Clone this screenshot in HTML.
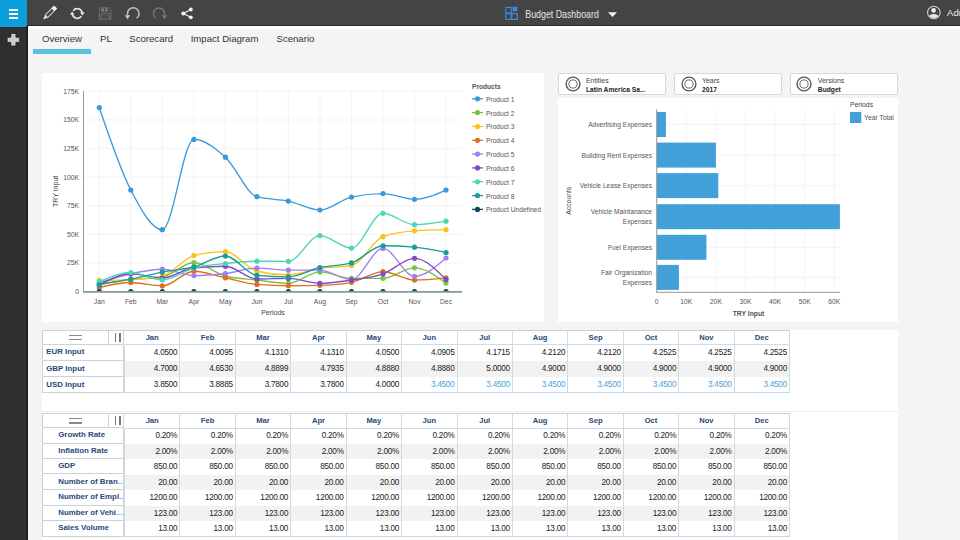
<!DOCTYPE html>
<html><head><meta charset="utf-8"><style>
*{margin:0;padding:0}
html,body{width:960px;height:540px;overflow:hidden;background:#f4f4f4;font-family:"Liberation Sans", sans-serif;position:relative}
.abs{position:absolute}
.fbox{position:absolute;top:73.2px;width:108px;height:21.4px;background:#fff;border:1px solid #d2d9d9;border-radius:2px;box-sizing:border-box}
.ft{position:absolute;left:27px;top:2.4px;font-size:6.9px;color:#444;line-height:8px;white-space:nowrap}
.fv{position:absolute;left:27px;top:11.6px;font-size:6.7px;color:#222;font-weight:bold;line-height:8px;white-space:nowrap}
.rh{position:absolute;left:41.7px;width:82.8px;box-sizing:border-box;border:1px solid #cdd3d3;border-top:0;font-size:7.9px;font-weight:bold;color:#294a78;white-space:nowrap;overflow:hidden}
.ch{position:absolute;text-align:center;font-size:7.6px;font-weight:bold;color:#294a78}
.cv{position:absolute;text-align:right;font-size:8.2px;letter-spacing:-0.25px;color:#222}
.bl{color:#4b9fe0}
.tab{position:absolute;top:33px;font-size:9.6px;color:#333;line-height:11px;white-space:nowrap}
</style></head><body>
<div class="abs" style="left:0;top:0;width:960px;height:26.4px;background:#444"></div>
<div class="abs" style="left:0;top:24.8px;width:960px;height:1.6px;background:#262626"></div>
<div class="abs" style="left:0;top:0;width:26.5px;height:26.5px;background:#0a9fdb"></div>
<div class="abs" style="left:8.6px;top:8.9px;width:9.4px;height:1.9px;background:#fff"></div>
<div class="abs" style="left:8.6px;top:12.9px;width:9.4px;height:1.9px;background:#fff"></div>
<div class="abs" style="left:8.6px;top:16.9px;width:9.4px;height:1.9px;background:#fff"></div>
<div class="abs" style="left:0;top:26.5px;width:26.5px;height:514px;background:#2f2f2f"></div>
<div class="abs" style="left:26.4px;top:26px;width:1.5px;height:514px;background:#1e1e1e"></div>
<div class="abs" style="left:27.9px;top:26.4px;width:933px;height:2.6px;background:#fff"></div>
<svg class="abs" style="left:0;top:26px" width="27" height="27"><path d="M10.9 7.5h5v3.8h3.7v5h-3.7v3.7h-5v-3.7h-3.7v-5h3.7z" fill="#cdcdcd" stroke="#1e1e1e" stroke-width="0.7" stroke-linejoin="round"/></svg>
<svg class="abs" style="left:0;top:0" width="960" height="26">
<g transform="translate(43.2,19.5) rotate(-45)">
<path d="M0,0 L4.2,-1.9 L4.2,1.9 Z" fill="#e6e6e6"/>
<rect x="4.6" y="-1.75" width="9.6" height="3.5" fill="none" stroke="#d8d8d8" stroke-width="1"/>
<rect x="14.2" y="-2.2" width="3.4" height="4.4" fill="#f0f0f0"/>
</g>
<g fill="none" stroke="#e6e6e6" stroke-width="1.7">
<path d="M73.3 10.7 A4.9 4.9 0 0 1 82.1 12.65"/>
<path d="M81.3 16.3 A4.9 4.9 0 0 1 72.5 14.35"/>
</g>
<path d="M80.2 12.4 L84.6 12.2 L82.5 15.4 Z" fill="#f0f0f0"/>
<path d="M74.4 14.6 L70.0 14.8 L72.1 11.6 Z" fill="#f0f0f0"/>
<g fill="none" stroke="#6e6e6e" stroke-width="1">
<path d="M99.3 7.8 h9.8 l1.9 1.9 v9.6 h-11.7 z"/>
<path d="M101.5 7.8 v3.6 h6 v-3.6"/>
<path d="M101.2 13.6 h8.2 v5.7"/>
<path d="M101.2 13.6 v5.7"/>
</g>
<path d="M102.2 8.4 h1.6 v2.6 h-1.6z M105.4 8.4 h1.6 v2.6 h-1.6z" fill="#8a8a8a"/>
<path d="M102.5 15.5 h5.6 M102.5 17.3 h5.6" stroke="#5c5c5c" stroke-width="0.7"/>
<path d="M136.55 18.2 A5.75 5.75 0 1 0 127.5 13.5 L127.5 15" fill="none" stroke="#bcbcbc" stroke-width="1.5"/>
<path d="M124.9 15.2 L130.1 15.2 L127.5 19.3 Z" fill="#d0d0d0"/>
<path d="M155.8 18 A5.5 5.5 0 1 1 164.5 13.5 L164.5 15" fill="none" stroke="#787878" stroke-width="1.3"/>
<path d="M161.9 15.2 L167.1 15.2 L164.5 19.3 Z" fill="#7c7c7c"/>
<g stroke="#f2f2f2" stroke-width="1.2"><path d="M183.3 13.5 L190.8 9.5 M183.3 13.5 L190.8 17.3"/></g>
<circle cx="183.3" cy="13.5" r="2" fill="#f6f6f6"/><circle cx="190.8" cy="9.5" r="1.9" fill="#f6f6f6"/><circle cx="190.8" cy="17.3" r="1.9" fill="#f6f6f6"/>
<g fill="none" stroke="#3b8ad6" stroke-width="1.2">
<rect x="505.8" y="7.4" width="5.4" height="5.6" /><rect x="505.8" y="13.6" width="5.4" height="5.8"/><rect x="511.8" y="13.6" width="5.6" height="5.8"/>
</g>
<rect x="512.6" y="6.8" width="4.6" height="4.6" fill="#3b8ad6"/>
<text x="525.3" y="17.6" font-size="10.1" fill="#e4e4e4" font-family='Liberation Sans' textLength="73.5" lengthAdjust="spacingAndGlyphs">Budget Dashboard</text>
<path d="M608 12.2 L617 12.2 L612.5 17 Z" fill="#f0f0f0"/>
<circle cx="933.85" cy="12.5" r="6.3" fill="none" stroke="#d4d4d4" stroke-width="1.1"/>
<clipPath id="uc"><circle cx="933.85" cy="12.5" r="5.6"/></clipPath>
<circle cx="933.6" cy="10.4" r="2.35" fill="#ececec"/>
<path d="M927 19.5 L927.8 17.6 Q929.5 14.2 933.7 14.1 Q937.9 14.2 939.6 17.6 L940.5 19.5 Z" fill="#e6e6e6" clip-path="url(#uc)"/>
<text x="947.1" y="16.4" font-size="9.5" fill="#eee" font-family='Liberation Sans'>Admin</text>
</svg>
<div class="tab" style="left:42px">Overview</div>
<div class="tab" style="left:100px">PL</div>
<div class="tab" style="left:129.3px">Scorecard</div>
<div class="tab" style="left:190.7px">Impact Diagram</div>
<div class="tab" style="left:276.5px">Scenario</div>
<div class="abs" style="left:33px;top:49.2px;width:58px;height:4.6px;background:#5bc2de"></div>
<div class="abs" style="left:41.7px;top:73px;width:502.7px;height:249.3px;background:#fff"></div>
<div class="abs" style="left:558px;top:97.5px;width:339.5px;height:224.8px;background:#fff"></div>
<div class="abs" style="left:41.7px;top:330px;width:856px;height:210px;background:#fff"></div>
<div class="abs" style="left:41.7px;top:411.4px;width:856px;height:0.8px;background:#ececec"></div>
<div class="fbox" style="left:558.0px"><svg width="18" height="18" style="position:absolute;left:4.6px;top:0.6px"><circle cx="9" cy="9" r="6.9" fill="none" stroke="#555" stroke-width="1.4"/><circle cx="9" cy="9" r="4.1" fill="none" stroke="#666" stroke-width="1"/></svg><div class="ft">Entities</div><div class="fv">Latin America Sa...</div></div><div class="fbox" style="left:674.0px"><svg width="18" height="18" style="position:absolute;left:4.6px;top:0.6px"><circle cx="9" cy="9" r="6.9" fill="none" stroke="#555" stroke-width="1.4"/><circle cx="9" cy="9" r="4.1" fill="none" stroke="#666" stroke-width="1"/></svg><div class="ft">Years</div><div class="fv">2017</div></div><div class="fbox" style="left:789.8px"><svg width="18" height="18" style="position:absolute;left:4.6px;top:0.6px"><circle cx="9" cy="9" r="6.9" fill="none" stroke="#555" stroke-width="1.4"/><circle cx="9" cy="9" r="4.1" fill="none" stroke="#666" stroke-width="1"/></svg><div class="ft">Versions</div><div class="fv">Budget</div></div>
<svg class="abs" style="left:0;top:0;font-family:"Liberation Sans", sans-serif" width="960" height="540">
<line x1="84" y1="291.6" x2="462" y2="291.6" stroke="#f0f0f0" stroke-width="0.8"/>
<text x="79" y="294.0" text-anchor="end" font-size="6.8" fill="#555">0</text>
<line x1="84" y1="263.0" x2="462" y2="263.0" stroke="#f0f0f0" stroke-width="0.8"/>
<text x="79" y="265.4" text-anchor="end" font-size="6.8" fill="#555">25K</text>
<line x1="84" y1="234.4" x2="462" y2="234.4" stroke="#f0f0f0" stroke-width="0.8"/>
<text x="79" y="236.8" text-anchor="end" font-size="6.8" fill="#555">50K</text>
<line x1="84" y1="205.8" x2="462" y2="205.8" stroke="#f0f0f0" stroke-width="0.8"/>
<text x="79" y="208.2" text-anchor="end" font-size="6.8" fill="#555">75K</text>
<line x1="84" y1="177.2" x2="462" y2="177.2" stroke="#f0f0f0" stroke-width="0.8"/>
<text x="79" y="179.6" text-anchor="end" font-size="6.8" fill="#555">100K</text>
<line x1="84" y1="148.6" x2="462" y2="148.6" stroke="#f0f0f0" stroke-width="0.8"/>
<text x="79" y="151.0" text-anchor="end" font-size="6.8" fill="#555">125K</text>
<line x1="84" y1="120.0" x2="462" y2="120.0" stroke="#f0f0f0" stroke-width="0.8"/>
<text x="79" y="122.4" text-anchor="end" font-size="6.8" fill="#555">150K</text>
<line x1="84" y1="91.4" x2="462" y2="91.4" stroke="#f0f0f0" stroke-width="0.8"/>
<text x="79" y="93.8" text-anchor="end" font-size="6.8" fill="#555">175K</text>
<line x1="99.3" y1="91" x2="99.3" y2="291.6" stroke="#f0f0f0" stroke-width="0.8"/>
<text x="99.3" y="304" text-anchor="middle" font-size="6.8" fill="#555">Jan</text>
<line x1="130.8" y1="91" x2="130.8" y2="291.6" stroke="#f0f0f0" stroke-width="0.8"/>
<text x="130.8" y="304" text-anchor="middle" font-size="6.8" fill="#555">Feb</text>
<line x1="162.3" y1="91" x2="162.3" y2="291.6" stroke="#f0f0f0" stroke-width="0.8"/>
<text x="162.3" y="304" text-anchor="middle" font-size="6.8" fill="#555">Mar</text>
<line x1="193.9" y1="91" x2="193.9" y2="291.6" stroke="#f0f0f0" stroke-width="0.8"/>
<text x="193.9" y="304" text-anchor="middle" font-size="6.8" fill="#555">Apr</text>
<line x1="225.4" y1="91" x2="225.4" y2="291.6" stroke="#f0f0f0" stroke-width="0.8"/>
<text x="225.4" y="304" text-anchor="middle" font-size="6.8" fill="#555">May</text>
<line x1="256.9" y1="91" x2="256.9" y2="291.6" stroke="#f0f0f0" stroke-width="0.8"/>
<text x="256.9" y="304" text-anchor="middle" font-size="6.8" fill="#555">Jun</text>
<line x1="288.4" y1="91" x2="288.4" y2="291.6" stroke="#f0f0f0" stroke-width="0.8"/>
<text x="288.4" y="304" text-anchor="middle" font-size="6.8" fill="#555">Jul</text>
<line x1="319.9" y1="91" x2="319.9" y2="291.6" stroke="#f0f0f0" stroke-width="0.8"/>
<text x="319.9" y="304" text-anchor="middle" font-size="6.8" fill="#555">Aug</text>
<line x1="351.5" y1="91" x2="351.5" y2="291.6" stroke="#f0f0f0" stroke-width="0.8"/>
<text x="351.5" y="304" text-anchor="middle" font-size="6.8" fill="#555">Sep</text>
<line x1="383.0" y1="91" x2="383.0" y2="291.6" stroke="#f0f0f0" stroke-width="0.8"/>
<text x="383.0" y="304" text-anchor="middle" font-size="6.8" fill="#555">Oct</text>
<line x1="414.5" y1="91" x2="414.5" y2="291.6" stroke="#f0f0f0" stroke-width="0.8"/>
<text x="414.5" y="304" text-anchor="middle" font-size="6.8" fill="#555">Nov</text>
<line x1="446.0" y1="91" x2="446.0" y2="291.6" stroke="#f0f0f0" stroke-width="0.8"/>
<text x="446.0" y="304" text-anchor="middle" font-size="6.8" fill="#555">Dec</text>
<line x1="83.5" y1="91" x2="83.5" y2="291.6" stroke="#999" stroke-width="1"/>
<clipPath id="pc"><rect x="60" y="80" width="420" height="211.6"/></clipPath>
<text x="273" y="315" text-anchor="middle" font-size="7" fill="#444">Periods</text>
<text transform="translate(58.3,191.4) rotate(-90)" text-anchor="middle" font-size="7" fill="#444">TRY Input</text>
<g clip-path="url(#pc)">
<path d="M99.30,107.50 C109.81,138.57 120.31,169.63 130.82,190.00 C141.33,210.37 151.83,229.70 162.34,229.70 C172.85,229.70 183.35,139.40 193.86,139.40 C204.37,139.40 214.87,147.65 225.38,157.20 C235.89,166.75 246.39,193.77 256.90,196.70 C267.41,199.63 277.91,198.88 288.42,201.10 C298.93,203.32 309.43,210.00 319.94,210.00 C330.45,210.00 340.95,199.43 351.46,197.10 C361.97,194.77 372.47,193.60 382.98,193.60 C393.49,193.60 403.99,199.30 414.50,199.30 C425.01,199.30 435.51,194.70 446.02,190.10" fill="none" stroke="#3a9ad9" stroke-width="1.35"/>
<circle cx="99.3" cy="107.5" r="2.6" fill="#3a9ad9"/>
<circle cx="130.8" cy="190.0" r="2.6" fill="#3a9ad9"/>
<circle cx="162.3" cy="229.7" r="2.6" fill="#3a9ad9"/>
<circle cx="193.9" cy="139.4" r="2.6" fill="#3a9ad9"/>
<circle cx="225.4" cy="157.2" r="2.6" fill="#3a9ad9"/>
<circle cx="256.9" cy="196.7" r="2.6" fill="#3a9ad9"/>
<circle cx="288.4" cy="201.1" r="2.6" fill="#3a9ad9"/>
<circle cx="319.9" cy="210.0" r="2.6" fill="#3a9ad9"/>
<circle cx="351.5" cy="197.1" r="2.6" fill="#3a9ad9"/>
<circle cx="383.0" cy="193.6" r="2.6" fill="#3a9ad9"/>
<circle cx="414.5" cy="199.3" r="2.6" fill="#3a9ad9"/>
<circle cx="446.0" cy="190.1" r="2.6" fill="#3a9ad9"/>
<path d="M99.30,284.00 C109.81,282.33 120.31,280.67 130.82,279.50 C141.33,278.33 151.83,278.67 162.34,277.00 C172.85,275.33 183.35,262.50 193.86,262.50 C204.37,262.50 214.87,273.33 225.38,276.00 C235.89,278.67 246.39,278.78 256.90,280.00 C267.41,281.22 277.91,283.30 288.42,283.30 C298.93,283.30 309.43,271.90 319.94,271.90 C330.45,271.90 340.95,278.40 351.46,278.40 C361.97,278.40 372.47,278.37 382.98,278.30 C393.49,278.23 403.99,267.80 414.50,267.80 C425.01,267.80 435.51,275.40 446.02,283.00" fill="none" stroke="#7cc243" stroke-width="1.35"/>
<circle cx="99.3" cy="284.0" r="2.6" fill="#7cc243"/>
<circle cx="130.8" cy="279.5" r="2.6" fill="#7cc243"/>
<circle cx="162.3" cy="277.0" r="2.6" fill="#7cc243"/>
<circle cx="193.9" cy="262.5" r="2.6" fill="#7cc243"/>
<circle cx="225.4" cy="276.0" r="2.6" fill="#7cc243"/>
<circle cx="256.9" cy="280.0" r="2.6" fill="#7cc243"/>
<circle cx="288.4" cy="283.3" r="2.6" fill="#7cc243"/>
<circle cx="319.9" cy="271.9" r="2.6" fill="#7cc243"/>
<circle cx="351.5" cy="278.4" r="2.6" fill="#7cc243"/>
<circle cx="383.0" cy="278.3" r="2.6" fill="#7cc243"/>
<circle cx="414.5" cy="267.8" r="2.6" fill="#7cc243"/>
<circle cx="446.0" cy="283.0" r="2.6" fill="#7cc243"/>
<path d="M99.30,280.40 C109.81,280.27 120.31,280.13 130.82,279.60 C141.33,279.07 151.83,278.40 162.34,276.00 C172.85,273.60 183.35,258.27 193.86,255.60 C204.37,252.93 214.87,251.60 225.38,251.60 C235.89,251.60 246.39,268.82 256.90,271.25 C267.41,273.68 277.91,274.90 288.42,274.90 C298.93,274.90 309.43,269.98 319.94,268.40 C330.45,266.82 340.95,267.40 351.46,265.40 C361.97,263.40 372.47,240.63 382.98,236.70 C393.49,232.77 403.99,231.53 414.50,230.80 C425.01,230.07 435.51,229.88 446.02,229.70" fill="none" stroke="#f7c21c" stroke-width="1.35"/>
<circle cx="99.3" cy="280.4" r="2.6" fill="#f7c21c"/>
<circle cx="130.8" cy="279.6" r="2.6" fill="#f7c21c"/>
<circle cx="162.3" cy="276.0" r="2.6" fill="#f7c21c"/>
<circle cx="193.9" cy="255.6" r="2.6" fill="#f7c21c"/>
<circle cx="225.4" cy="251.6" r="2.6" fill="#f7c21c"/>
<circle cx="256.9" cy="271.2" r="2.6" fill="#f7c21c"/>
<circle cx="288.4" cy="274.9" r="2.6" fill="#f7c21c"/>
<circle cx="319.9" cy="268.4" r="2.6" fill="#f7c21c"/>
<circle cx="351.5" cy="265.4" r="2.6" fill="#f7c21c"/>
<circle cx="383.0" cy="236.7" r="2.6" fill="#f7c21c"/>
<circle cx="414.5" cy="230.8" r="2.6" fill="#f7c21c"/>
<circle cx="446.0" cy="229.7" r="2.6" fill="#f7c21c"/>
<path d="M99.30,287.50 C109.81,285.00 120.31,282.50 130.82,282.50 C141.33,282.50 151.83,285.90 162.34,285.90 C172.85,285.90 183.35,271.25 193.86,271.25 C204.37,271.25 214.87,275.56 225.38,277.75 C235.89,279.94 246.39,283.53 256.90,284.40 C267.41,285.27 277.91,285.70 288.42,285.70 C298.93,285.70 309.43,285.57 319.94,285.30 C330.45,285.03 340.95,284.30 351.46,282.30 C361.97,280.30 372.47,271.70 382.98,271.70 C393.49,271.70 403.99,280.00 414.50,280.00 C425.01,280.00 435.51,278.90 446.02,277.80" fill="none" stroke="#df6f20" stroke-width="1.35"/>
<circle cx="99.3" cy="287.5" r="2.6" fill="#df6f20"/>
<circle cx="130.8" cy="282.5" r="2.6" fill="#df6f20"/>
<circle cx="162.3" cy="285.9" r="2.6" fill="#df6f20"/>
<circle cx="193.9" cy="271.2" r="2.6" fill="#df6f20"/>
<circle cx="225.4" cy="277.8" r="2.6" fill="#df6f20"/>
<circle cx="256.9" cy="284.4" r="2.6" fill="#df6f20"/>
<circle cx="288.4" cy="285.7" r="2.6" fill="#df6f20"/>
<circle cx="319.9" cy="285.3" r="2.6" fill="#df6f20"/>
<circle cx="351.5" cy="282.3" r="2.6" fill="#df6f20"/>
<circle cx="383.0" cy="271.7" r="2.6" fill="#df6f20"/>
<circle cx="414.5" cy="280.0" r="2.6" fill="#df6f20"/>
<circle cx="446.0" cy="277.8" r="2.6" fill="#df6f20"/>
<path d="M99.30,283.00 C109.81,279.52 120.31,276.05 130.82,273.75 C141.33,271.45 151.83,269.20 162.34,269.20 C172.85,269.20 183.35,275.60 193.86,275.60 C204.37,275.60 214.87,274.75 225.38,273.50 C235.89,272.25 246.39,268.10 256.90,268.10 C267.41,268.10 277.91,270.10 288.42,270.10 C298.93,270.10 309.43,270.10 319.94,270.10 C330.45,270.10 340.95,279.50 351.46,279.50 C361.97,279.50 372.47,248.40 382.98,248.40 C393.49,248.40 403.99,276.30 414.50,276.30 C425.01,276.30 435.51,267.15 446.02,258.00" fill="none" stroke="#a27ff0" stroke-width="1.35"/>
<circle cx="99.3" cy="283.0" r="2.6" fill="#a27ff0"/>
<circle cx="130.8" cy="273.8" r="2.6" fill="#a27ff0"/>
<circle cx="162.3" cy="269.2" r="2.6" fill="#a27ff0"/>
<circle cx="193.9" cy="275.6" r="2.6" fill="#a27ff0"/>
<circle cx="225.4" cy="273.5" r="2.6" fill="#a27ff0"/>
<circle cx="256.9" cy="268.1" r="2.6" fill="#a27ff0"/>
<circle cx="288.4" cy="270.1" r="2.6" fill="#a27ff0"/>
<circle cx="319.9" cy="270.1" r="2.6" fill="#a27ff0"/>
<circle cx="351.5" cy="279.5" r="2.6" fill="#a27ff0"/>
<circle cx="383.0" cy="248.4" r="2.6" fill="#a27ff0"/>
<circle cx="414.5" cy="276.3" r="2.6" fill="#a27ff0"/>
<circle cx="446.0" cy="258.0" r="2.6" fill="#a27ff0"/>
<path d="M99.30,285.00 C109.81,279.38 120.31,273.75 130.82,273.75 C141.33,273.75 151.83,278.00 162.34,278.00 C172.85,278.00 183.35,268.75 193.86,267.75 C204.37,266.75 214.87,266.25 225.38,266.25 C235.89,266.25 246.39,279.00 256.90,279.00 C267.41,279.00 277.91,278.40 288.42,278.40 C298.93,278.40 309.43,283.30 319.94,283.30 C330.45,283.30 340.95,281.68 351.46,280.10 C361.97,278.52 372.47,277.43 382.98,273.80 C393.49,270.17 403.99,258.30 414.50,258.30 C425.01,258.30 435.51,268.90 446.02,279.50" fill="none" stroke="#7b4cc3" stroke-width="1.35"/>
<circle cx="99.3" cy="285.0" r="2.6" fill="#7b4cc3"/>
<circle cx="130.8" cy="273.8" r="2.6" fill="#7b4cc3"/>
<circle cx="162.3" cy="278.0" r="2.6" fill="#7b4cc3"/>
<circle cx="193.9" cy="267.8" r="2.6" fill="#7b4cc3"/>
<circle cx="225.4" cy="266.2" r="2.6" fill="#7b4cc3"/>
<circle cx="256.9" cy="279.0" r="2.6" fill="#7b4cc3"/>
<circle cx="288.4" cy="278.4" r="2.6" fill="#7b4cc3"/>
<circle cx="319.9" cy="283.3" r="2.6" fill="#7b4cc3"/>
<circle cx="351.5" cy="280.1" r="2.6" fill="#7b4cc3"/>
<circle cx="383.0" cy="273.8" r="2.6" fill="#7b4cc3"/>
<circle cx="414.5" cy="258.3" r="2.6" fill="#7b4cc3"/>
<circle cx="446.0" cy="279.5" r="2.6" fill="#7b4cc3"/>
<path d="M99.30,281.70 C109.81,277.10 120.31,272.50 130.82,272.50 C141.33,272.50 151.83,280.00 162.34,280.00 C172.85,280.00 183.35,270.75 193.86,268.00 C204.37,265.25 214.87,264.62 225.38,263.50 C235.89,262.38 246.39,261.25 256.90,261.25 C267.41,261.25 277.91,261.30 288.42,261.30 C298.93,261.30 309.43,235.60 319.94,235.60 C330.45,235.60 340.95,248.10 351.46,248.10 C361.97,248.10 372.47,213.30 382.98,213.30 C393.49,213.30 403.99,224.70 414.50,224.70 C425.01,224.70 435.51,222.95 446.02,221.20" fill="none" stroke="#4ed5b5" stroke-width="1.35"/>
<circle cx="99.3" cy="281.7" r="2.6" fill="#4ed5b5"/>
<circle cx="130.8" cy="272.5" r="2.6" fill="#4ed5b5"/>
<circle cx="162.3" cy="280.0" r="2.6" fill="#4ed5b5"/>
<circle cx="193.9" cy="268.0" r="2.6" fill="#4ed5b5"/>
<circle cx="225.4" cy="263.5" r="2.6" fill="#4ed5b5"/>
<circle cx="256.9" cy="261.2" r="2.6" fill="#4ed5b5"/>
<circle cx="288.4" cy="261.3" r="2.6" fill="#4ed5b5"/>
<circle cx="319.9" cy="235.6" r="2.6" fill="#4ed5b5"/>
<circle cx="351.5" cy="248.1" r="2.6" fill="#4ed5b5"/>
<circle cx="383.0" cy="213.3" r="2.6" fill="#4ed5b5"/>
<circle cx="414.5" cy="224.7" r="2.6" fill="#4ed5b5"/>
<circle cx="446.0" cy="221.2" r="2.6" fill="#4ed5b5"/>
<path d="M99.30,284.60 C109.81,282.94 120.31,281.28 130.82,279.20 C141.33,277.12 151.83,274.15 162.34,272.10 C172.85,270.05 183.35,269.58 193.86,266.90 C204.37,264.22 214.87,256.00 225.38,256.00 C235.89,256.00 246.39,274.40 256.90,275.40 C267.41,276.40 277.91,276.90 288.42,276.90 C298.93,276.90 309.43,269.83 319.94,267.50 C330.45,265.17 340.95,265.97 351.46,262.90 C361.97,259.83 372.47,245.80 382.98,245.80 C393.49,245.80 403.99,246.27 414.50,247.20 C425.01,248.13 435.51,250.32 446.02,252.50" fill="none" stroke="#1a9d98" stroke-width="1.35"/>
<circle cx="99.3" cy="284.6" r="2.6" fill="#1a9d98"/>
<circle cx="130.8" cy="279.2" r="2.6" fill="#1a9d98"/>
<circle cx="162.3" cy="272.1" r="2.6" fill="#1a9d98"/>
<circle cx="193.9" cy="266.9" r="2.6" fill="#1a9d98"/>
<circle cx="225.4" cy="256.0" r="2.6" fill="#1a9d98"/>
<circle cx="256.9" cy="275.4" r="2.6" fill="#1a9d98"/>
<circle cx="288.4" cy="276.9" r="2.6" fill="#1a9d98"/>
<circle cx="319.9" cy="267.5" r="2.6" fill="#1a9d98"/>
<circle cx="351.5" cy="262.9" r="2.6" fill="#1a9d98"/>
<circle cx="383.0" cy="245.8" r="2.6" fill="#1a9d98"/>
<circle cx="414.5" cy="247.2" r="2.6" fill="#1a9d98"/>
<circle cx="446.0" cy="252.5" r="2.6" fill="#1a9d98"/>
<path d="M99.30,291.60 C109.81,291.60 120.31,291.60 130.82,291.60 C141.33,291.60 151.83,291.60 162.34,291.60 C172.85,291.60 183.35,291.60 193.86,291.60 C204.37,291.60 214.87,291.60 225.38,291.60 C235.89,291.60 246.39,291.60 256.90,291.60 C267.41,291.60 277.91,291.60 288.42,291.60 C298.93,291.60 309.43,291.60 319.94,291.60 C330.45,291.60 340.95,291.60 351.46,291.60 C361.97,291.60 372.47,291.60 382.98,291.60 C393.49,291.60 403.99,291.60 414.50,291.60 C425.01,291.60 435.51,291.60 446.02,291.60" fill="none" stroke="#0b4a5a" stroke-width="1.35"/>
<circle cx="99.3" cy="291.6" r="2.6" fill="#0b4a5a"/>
<circle cx="130.8" cy="291.6" r="2.6" fill="#0b4a5a"/>
<circle cx="162.3" cy="291.6" r="2.6" fill="#0b4a5a"/>
<circle cx="193.9" cy="291.6" r="2.6" fill="#0b4a5a"/>
<circle cx="225.4" cy="291.6" r="2.6" fill="#0b4a5a"/>
<circle cx="256.9" cy="291.6" r="2.6" fill="#0b4a5a"/>
<circle cx="288.4" cy="291.6" r="2.6" fill="#0b4a5a"/>
<circle cx="319.9" cy="291.6" r="2.6" fill="#0b4a5a"/>
<circle cx="351.5" cy="291.6" r="2.6" fill="#0b4a5a"/>
<circle cx="383.0" cy="291.6" r="2.6" fill="#0b4a5a"/>
<circle cx="414.5" cy="291.6" r="2.6" fill="#0b4a5a"/>
<circle cx="446.0" cy="291.6" r="2.6" fill="#0b4a5a"/>
</g>
<line x1="83" y1="291.9" x2="462" y2="291.9" stroke="#829a98" stroke-width="1.8"/>
<text x="472" y="88.8" font-size="6.6" font-weight="bold" fill="#555">Products</text>
<line x1="472" y1="98.8" x2="483" y2="98.8" stroke="#3a9ad9" stroke-width="1.3"/>
<circle cx="477.5" cy="98.8" r="2.6" fill="#3a9ad9"/>
<text x="486" y="101.7" font-size="6.65" fill="#555">Product 1</text>
<line x1="472" y1="112.6" x2="483" y2="112.6" stroke="#7cc243" stroke-width="1.3"/>
<circle cx="477.5" cy="112.6" r="2.6" fill="#7cc243"/>
<text x="486" y="115.5" font-size="6.65" fill="#555">Product 2</text>
<line x1="472" y1="126.5" x2="483" y2="126.5" stroke="#f7c21c" stroke-width="1.3"/>
<circle cx="477.5" cy="126.5" r="2.6" fill="#f7c21c"/>
<text x="486" y="129.4" font-size="6.65" fill="#555">Product 3</text>
<line x1="472" y1="140.3" x2="483" y2="140.3" stroke="#df6f20" stroke-width="1.3"/>
<circle cx="477.5" cy="140.3" r="2.6" fill="#df6f20"/>
<text x="486" y="143.2" font-size="6.65" fill="#555">Product 4</text>
<line x1="472" y1="154.1" x2="483" y2="154.1" stroke="#a27ff0" stroke-width="1.3"/>
<circle cx="477.5" cy="154.1" r="2.6" fill="#a27ff0"/>
<text x="486" y="157.0" font-size="6.65" fill="#555">Product 5</text>
<line x1="472" y1="167.9" x2="483" y2="167.9" stroke="#7b4cc3" stroke-width="1.3"/>
<circle cx="477.5" cy="167.9" r="2.6" fill="#7b4cc3"/>
<text x="486" y="170.8" font-size="6.65" fill="#555">Product 6</text>
<line x1="472" y1="181.8" x2="483" y2="181.8" stroke="#4ed5b5" stroke-width="1.3"/>
<circle cx="477.5" cy="181.8" r="2.6" fill="#4ed5b5"/>
<text x="486" y="184.7" font-size="6.65" fill="#555">Product 7</text>
<line x1="472" y1="195.6" x2="483" y2="195.6" stroke="#1a9d98" stroke-width="1.3"/>
<circle cx="477.5" cy="195.6" r="2.6" fill="#1a9d98"/>
<text x="486" y="198.5" font-size="6.65" fill="#555">Product 8</text>
<line x1="472" y1="209.4" x2="483" y2="209.4" stroke="#0b4a5a" stroke-width="1.3"/>
<circle cx="477.5" cy="209.4" r="2.6" fill="#0b4a5a"/>
<text x="486" y="212.3" font-size="6.65" fill="#555">Product Undefined</text>
<line x1="656.7" y1="109.3" x2="656.7" y2="292" stroke="#f0f0f0" stroke-width="0.8"/>
<text x="656.7" y="304.4" text-anchor="middle" font-size="6.8" fill="#555">0</text>
<line x1="686.3" y1="109.3" x2="686.3" y2="292" stroke="#f0f0f0" stroke-width="0.8"/>
<text x="686.3" y="304.4" text-anchor="middle" font-size="6.8" fill="#555">10K</text>
<line x1="715.9" y1="109.3" x2="715.9" y2="292" stroke="#f0f0f0" stroke-width="0.8"/>
<text x="715.9" y="304.4" text-anchor="middle" font-size="6.8" fill="#555">20K</text>
<line x1="745.5" y1="109.3" x2="745.5" y2="292" stroke="#f0f0f0" stroke-width="0.8"/>
<text x="745.5" y="304.4" text-anchor="middle" font-size="6.8" fill="#555">30K</text>
<line x1="775.1" y1="109.3" x2="775.1" y2="292" stroke="#f0f0f0" stroke-width="0.8"/>
<text x="775.1" y="304.4" text-anchor="middle" font-size="6.8" fill="#555">40K</text>
<line x1="804.7" y1="109.3" x2="804.7" y2="292" stroke="#f0f0f0" stroke-width="0.8"/>
<text x="804.7" y="304.4" text-anchor="middle" font-size="6.8" fill="#555">50K</text>
<line x1="834.3" y1="109.3" x2="834.3" y2="292" stroke="#f0f0f0" stroke-width="0.8"/>
<text x="834.3" y="304.4" text-anchor="middle" font-size="6.8" fill="#555">60K</text>
<line x1="657" y1="124.5" x2="840" y2="124.5" stroke="#f0f0f0" stroke-width="0.8"/>
<line x1="657" y1="155.1" x2="840" y2="155.1" stroke="#f0f0f0" stroke-width="0.8"/>
<line x1="657" y1="185.6" x2="840" y2="185.6" stroke="#f0f0f0" stroke-width="0.8"/>
<line x1="657" y1="216.7" x2="840" y2="216.7" stroke="#f0f0f0" stroke-width="0.8"/>
<line x1="657" y1="247.3" x2="840" y2="247.3" stroke="#f0f0f0" stroke-width="0.8"/>
<line x1="657" y1="277.4" x2="840" y2="277.4" stroke="#f0f0f0" stroke-width="0.8"/>
<rect x="656.7" y="112.0" width="9.2" height="25" fill="#42a0d9"/>
<text x="652" y="126.9" text-anchor="end" font-size="6.65" fill="#555">Advertising Expenses</text>
<rect x="656.7" y="142.6" width="59.2" height="25" fill="#42a0d9"/>
<text x="652" y="157.5" text-anchor="end" font-size="6.65" fill="#555">Building Rent Expenses</text>
<rect x="656.7" y="173.1" width="61.6" height="25" fill="#42a0d9"/>
<text x="652" y="188.0" text-anchor="end" font-size="6.65" fill="#555">Vehicle Lease Expenses</text>
<rect x="656.7" y="204.2" width="183.2" height="25" fill="#42a0d9"/>
<text x="652" y="214.1" text-anchor="end" font-size="6.65" fill="#555">Vehicle Maintanance</text>
<text x="652" y="223.9" text-anchor="end" font-size="6.65" fill="#555">Expenses</text>
<rect x="656.7" y="234.8" width="49.7" height="25" fill="#42a0d9"/>
<text x="652" y="249.7" text-anchor="end" font-size="6.65" fill="#555">Fuel Expenses</text>
<rect x="656.7" y="264.9" width="22.2" height="25" fill="#42a0d9"/>
<text x="652" y="274.8" text-anchor="end" font-size="6.65" fill="#555">Fair Organization</text>
<text x="652" y="284.6" text-anchor="end" font-size="6.65" fill="#555">Expenses</text>
<line x1="656.7" y1="109.3" x2="656.7" y2="292.5" stroke="#999" stroke-width="1"/>
<line x1="656.2" y1="292.3" x2="840" y2="292.3" stroke="#aaa" stroke-width="1.2"/>
<text x="748.5" y="315.8" text-anchor="middle" font-size="6.8" font-weight="bold" fill="#555">TRY Input</text>
<text transform="translate(571,200.7) rotate(-90)" text-anchor="middle" font-size="6.8" fill="#444">Accounts</text>
<text x="850" y="107" font-size="6.8" fill="#444">Periods</text>
<rect x="850" y="112" width="11.3" height="11" fill="#42a0d9"/>
<text x="864" y="120" font-size="6.8" fill="#555">Year Total</text>
</svg>
<div style="position:absolute;left:41.7px;top:330.3px;width:748.3px;height:62.3px;border:1px solid #c9cfcf;box-sizing:border-box"></div>
<div style="position:absolute;left:124.5px;top:360.6px;width:665.0px;height:16.0px;background:#f2f2f2"></div>
<div style="position:absolute;left:41.7px;top:330.3px;width:67.5px;height:14.5px;border:1px solid #cdd3d3;box-sizing:border-box"></div>
<div style="position:absolute;left:109.2px;top:330.3px;width:15.3px;height:14.5px;border:1px solid #cdd3d3;border-left:0;box-sizing:border-box"></div>
<div style="position:absolute;left:68.7px;top:334.9px;width:13.3px;height:1.3px;background:#888"></div>
<div style="position:absolute;left:68.7px;top:339.2px;width:13.3px;height:1.3px;background:#888"></div>
<div style="position:absolute;left:114.6px;top:333.2px;width:1.5px;height:8.8px;background:#777"></div>
<div style="position:absolute;left:119.1px;top:333.2px;width:1.5px;height:8.8px;background:#777"></div>
<div class="rh" style="top:344.8px;height:15.8px;line-height:14.8px;padding-left:3.5px">EUR Input</div>
<div class="rh" style="top:360.6px;height:16.0px;line-height:15.0px;padding-left:3.5px">GBP Input</div>
<div class="rh" style="top:376.6px;height:16.0px;line-height:15.0px;padding-left:3.5px">USD Input</div>
<div class="ch" style="left:124.5px;top:331.1px;width:55.4px;height:14.5px;line-height:14.5px">Jan</div>
<div style="position:absolute;left:179.4px;top:330.3px;width:1px;height:62.3px;background:#d3dada"></div>
<div class="ch" style="left:179.9px;top:331.1px;width:55.4px;height:14.5px;line-height:14.5px">Feb</div>
<div style="position:absolute;left:234.8px;top:330.3px;width:1px;height:62.3px;background:#d3dada"></div>
<div class="ch" style="left:235.3px;top:331.1px;width:55.4px;height:14.5px;line-height:14.5px">Mar</div>
<div style="position:absolute;left:290.3px;top:330.3px;width:1px;height:62.3px;background:#d3dada"></div>
<div class="ch" style="left:290.8px;top:331.1px;width:55.4px;height:14.5px;line-height:14.5px">Apr</div>
<div style="position:absolute;left:345.7px;top:330.3px;width:1px;height:62.3px;background:#d3dada"></div>
<div class="ch" style="left:346.2px;top:331.1px;width:55.4px;height:14.5px;line-height:14.5px">May</div>
<div style="position:absolute;left:401.1px;top:330.3px;width:1px;height:62.3px;background:#d3dada"></div>
<div class="ch" style="left:401.6px;top:331.1px;width:55.4px;height:14.5px;line-height:14.5px">Jun</div>
<div style="position:absolute;left:456.5px;top:330.3px;width:1px;height:62.3px;background:#d3dada"></div>
<div class="ch" style="left:457.0px;top:331.1px;width:55.4px;height:14.5px;line-height:14.5px">Jul</div>
<div style="position:absolute;left:511.9px;top:330.3px;width:1px;height:62.3px;background:#d3dada"></div>
<div class="ch" style="left:512.4px;top:331.1px;width:55.4px;height:14.5px;line-height:14.5px">Aug</div>
<div style="position:absolute;left:567.4px;top:330.3px;width:1px;height:62.3px;background:#d3dada"></div>
<div class="ch" style="left:567.9px;top:331.1px;width:55.4px;height:14.5px;line-height:14.5px">Sep</div>
<div style="position:absolute;left:622.8px;top:330.3px;width:1px;height:62.3px;background:#d3dada"></div>
<div class="ch" style="left:623.3px;top:331.1px;width:55.4px;height:14.5px;line-height:14.5px">Oct</div>
<div style="position:absolute;left:678.2px;top:330.3px;width:1px;height:62.3px;background:#d3dada"></div>
<div class="ch" style="left:678.7px;top:331.1px;width:55.4px;height:14.5px;line-height:14.5px">Nov</div>
<div style="position:absolute;left:733.6px;top:330.3px;width:1px;height:62.3px;background:#d3dada"></div>
<div class="ch" style="left:734.1px;top:331.1px;width:55.4px;height:14.5px;line-height:14.5px">Dec</div>
<div style="position:absolute;left:789.0px;top:330.3px;width:1px;height:62.3px;background:#d3dada"></div>
<div style="position:absolute;left:124.5px;top:344.3px;width:665.0px;height:1px;background:#c9dcf0"></div>
<div style="position:absolute;left:124.0px;top:344.8px;width:1px;height:47.8px;background:#c9dcf0"></div>
<div style="position:absolute;left:124.5px;top:391.6px;width:665.0px;height:1.2px;background:#c0d6ee"></div>
<div class="cv" style="left:124.5px;top:344.8px;width:52.9px;height:15.8px;line-height:15.8px">4.0500</div>
<div class="cv" style="left:179.9px;top:344.8px;width:52.9px;height:15.8px;line-height:15.8px">4.0095</div>
<div class="cv" style="left:235.3px;top:344.8px;width:52.9px;height:15.8px;line-height:15.8px">4.1310</div>
<div class="cv" style="left:290.8px;top:344.8px;width:52.9px;height:15.8px;line-height:15.8px">4.1310</div>
<div class="cv" style="left:346.2px;top:344.8px;width:52.9px;height:15.8px;line-height:15.8px">4.0500</div>
<div class="cv" style="left:401.6px;top:344.8px;width:52.9px;height:15.8px;line-height:15.8px">4.0905</div>
<div class="cv" style="left:457.0px;top:344.8px;width:52.9px;height:15.8px;line-height:15.8px">4.1715</div>
<div class="cv" style="left:512.4px;top:344.8px;width:52.9px;height:15.8px;line-height:15.8px">4.2120</div>
<div class="cv" style="left:567.9px;top:344.8px;width:52.9px;height:15.8px;line-height:15.8px">4.2120</div>
<div class="cv" style="left:623.3px;top:344.8px;width:52.9px;height:15.8px;line-height:15.8px">4.2525</div>
<div class="cv" style="left:678.7px;top:344.8px;width:52.9px;height:15.8px;line-height:15.8px">4.2525</div>
<div class="cv" style="left:734.1px;top:344.8px;width:52.9px;height:15.8px;line-height:15.8px">4.2525</div>
<div class="cv" style="left:124.5px;top:360.6px;width:52.9px;height:16.0px;line-height:16.0px">4.7000</div>
<div class="cv" style="left:179.9px;top:360.6px;width:52.9px;height:16.0px;line-height:16.0px">4.6530</div>
<div class="cv" style="left:235.3px;top:360.6px;width:52.9px;height:16.0px;line-height:16.0px">4.8899</div>
<div class="cv" style="left:290.8px;top:360.6px;width:52.9px;height:16.0px;line-height:16.0px">4.7935</div>
<div class="cv" style="left:346.2px;top:360.6px;width:52.9px;height:16.0px;line-height:16.0px">4.8880</div>
<div class="cv" style="left:401.6px;top:360.6px;width:52.9px;height:16.0px;line-height:16.0px">4.8880</div>
<div class="cv" style="left:457.0px;top:360.6px;width:52.9px;height:16.0px;line-height:16.0px">5.0000</div>
<div class="cv" style="left:512.4px;top:360.6px;width:52.9px;height:16.0px;line-height:16.0px">4.9000</div>
<div class="cv" style="left:567.9px;top:360.6px;width:52.9px;height:16.0px;line-height:16.0px">4.9000</div>
<div class="cv" style="left:623.3px;top:360.6px;width:52.9px;height:16.0px;line-height:16.0px">4.9000</div>
<div class="cv" style="left:678.7px;top:360.6px;width:52.9px;height:16.0px;line-height:16.0px">4.9000</div>
<div class="cv" style="left:734.1px;top:360.6px;width:52.9px;height:16.0px;line-height:16.0px">4.9000</div>
<div class="cv" style="left:124.5px;top:376.6px;width:52.9px;height:16.0px;line-height:16.0px">3.8500</div>
<div class="cv" style="left:179.9px;top:376.6px;width:52.9px;height:16.0px;line-height:16.0px">3.8885</div>
<div class="cv" style="left:235.3px;top:376.6px;width:52.9px;height:16.0px;line-height:16.0px">3.7800</div>
<div class="cv" style="left:290.8px;top:376.6px;width:52.9px;height:16.0px;line-height:16.0px">3.7800</div>
<div class="cv" style="left:346.2px;top:376.6px;width:52.9px;height:16.0px;line-height:16.0px">4.0000</div>
<div class="cv bl" style="left:401.6px;top:376.6px;width:52.9px;height:16.0px;line-height:16.0px">3.4500</div>
<div class="cv bl" style="left:457.0px;top:376.6px;width:52.9px;height:16.0px;line-height:16.0px">3.4500</div>
<div class="cv bl" style="left:512.4px;top:376.6px;width:52.9px;height:16.0px;line-height:16.0px">3.4500</div>
<div class="cv bl" style="left:567.9px;top:376.6px;width:52.9px;height:16.0px;line-height:16.0px">3.4500</div>
<div class="cv bl" style="left:623.3px;top:376.6px;width:52.9px;height:16.0px;line-height:16.0px">3.4500</div>
<div class="cv bl" style="left:678.7px;top:376.6px;width:52.9px;height:16.0px;line-height:16.0px">3.4500</div>
<div class="cv bl" style="left:734.1px;top:376.6px;width:52.9px;height:16.0px;line-height:16.0px">3.4500</div>
<div style="position:absolute;left:41.7px;top:413.3px;width:748.3px;height:123.5px;border:1px solid #c9cfcf;box-sizing:border-box"></div>
<div style="position:absolute;left:124.5px;top:443.7px;width:665.0px;height:15.1px;background:#f2f2f2"></div>
<div style="position:absolute;left:124.5px;top:474.5px;width:665.0px;height:15.5px;background:#f2f2f2"></div>
<div style="position:absolute;left:124.5px;top:505.7px;width:665.0px;height:15.5px;background:#f2f2f2"></div>
<div style="position:absolute;left:41.7px;top:413.3px;width:67.5px;height:14.7px;border:1px solid #cdd3d3;box-sizing:border-box"></div>
<div style="position:absolute;left:109.2px;top:413.3px;width:15.3px;height:14.7px;border:1px solid #cdd3d3;border-left:0;box-sizing:border-box"></div>
<div style="position:absolute;left:68.7px;top:418.1px;width:13.3px;height:1.3px;background:#888"></div>
<div style="position:absolute;left:68.7px;top:422.3px;width:13.3px;height:1.3px;background:#888"></div>
<div style="position:absolute;left:114.6px;top:416.3px;width:1.5px;height:8.8px;background:#777"></div>
<div style="position:absolute;left:119.1px;top:416.3px;width:1.5px;height:8.8px;background:#777"></div>
<div class="rh" style="top:428.0px;height:15.7px;line-height:14.7px;padding-left:15.5px">Growth Rate</div>
<div class="rh" style="top:443.7px;height:15.1px;line-height:14.1px;padding-left:15.5px">Inflation Rate</div>
<div class="rh" style="top:458.8px;height:15.7px;line-height:14.7px;padding-left:15.5px">GDP</div>
<div class="rh" style="top:474.5px;height:15.5px;line-height:14.5px;padding-left:15.5px">Number of Bran<span style="color:#5aa7e6">...</span></div>
<div class="rh" style="top:490.0px;height:15.7px;line-height:14.7px;padding-left:15.5px">Number of Empl<span style="color:#5aa7e6">...</span></div>
<div class="rh" style="top:505.7px;height:15.5px;line-height:14.5px;padding-left:15.5px">Number of Vehi<span style="color:#5aa7e6">...</span></div>
<div class="rh" style="top:521.2px;height:15.6px;line-height:14.6px;padding-left:15.5px">Sales Volume</div>
<div class="ch" style="left:124.5px;top:414.1px;width:55.4px;height:14.7px;line-height:14.7px">Jan</div>
<div style="position:absolute;left:179.4px;top:413.3px;width:1px;height:123.5px;background:#d3dada"></div>
<div class="ch" style="left:179.9px;top:414.1px;width:55.4px;height:14.7px;line-height:14.7px">Feb</div>
<div style="position:absolute;left:234.8px;top:413.3px;width:1px;height:123.5px;background:#d3dada"></div>
<div class="ch" style="left:235.3px;top:414.1px;width:55.4px;height:14.7px;line-height:14.7px">Mar</div>
<div style="position:absolute;left:290.3px;top:413.3px;width:1px;height:123.5px;background:#d3dada"></div>
<div class="ch" style="left:290.8px;top:414.1px;width:55.4px;height:14.7px;line-height:14.7px">Apr</div>
<div style="position:absolute;left:345.7px;top:413.3px;width:1px;height:123.5px;background:#d3dada"></div>
<div class="ch" style="left:346.2px;top:414.1px;width:55.4px;height:14.7px;line-height:14.7px">May</div>
<div style="position:absolute;left:401.1px;top:413.3px;width:1px;height:123.5px;background:#d3dada"></div>
<div class="ch" style="left:401.6px;top:414.1px;width:55.4px;height:14.7px;line-height:14.7px">Jun</div>
<div style="position:absolute;left:456.5px;top:413.3px;width:1px;height:123.5px;background:#d3dada"></div>
<div class="ch" style="left:457.0px;top:414.1px;width:55.4px;height:14.7px;line-height:14.7px">Jul</div>
<div style="position:absolute;left:511.9px;top:413.3px;width:1px;height:123.5px;background:#d3dada"></div>
<div class="ch" style="left:512.4px;top:414.1px;width:55.4px;height:14.7px;line-height:14.7px">Aug</div>
<div style="position:absolute;left:567.4px;top:413.3px;width:1px;height:123.5px;background:#d3dada"></div>
<div class="ch" style="left:567.9px;top:414.1px;width:55.4px;height:14.7px;line-height:14.7px">Sep</div>
<div style="position:absolute;left:622.8px;top:413.3px;width:1px;height:123.5px;background:#d3dada"></div>
<div class="ch" style="left:623.3px;top:414.1px;width:55.4px;height:14.7px;line-height:14.7px">Oct</div>
<div style="position:absolute;left:678.2px;top:413.3px;width:1px;height:123.5px;background:#d3dada"></div>
<div class="ch" style="left:678.7px;top:414.1px;width:55.4px;height:14.7px;line-height:14.7px">Nov</div>
<div style="position:absolute;left:733.6px;top:413.3px;width:1px;height:123.5px;background:#d3dada"></div>
<div class="ch" style="left:734.1px;top:414.1px;width:55.4px;height:14.7px;line-height:14.7px">Dec</div>
<div style="position:absolute;left:789.0px;top:413.3px;width:1px;height:123.5px;background:#d3dada"></div>
<div style="position:absolute;left:124.5px;top:427.5px;width:665.0px;height:1px;background:#c9dcf0"></div>
<div style="position:absolute;left:124.0px;top:428.0px;width:1px;height:108.8px;background:#c9dcf0"></div>
<div style="position:absolute;left:124.5px;top:535.8px;width:665.0px;height:1.2px;background:#c0d6ee"></div>
<div class="cv" style="left:124.5px;top:428.0px;width:52.9px;height:15.7px;line-height:15.7px">0.20%</div>
<div class="cv" style="left:179.9px;top:428.0px;width:52.9px;height:15.7px;line-height:15.7px">0.20%</div>
<div class="cv" style="left:235.3px;top:428.0px;width:52.9px;height:15.7px;line-height:15.7px">0.20%</div>
<div class="cv" style="left:290.8px;top:428.0px;width:52.9px;height:15.7px;line-height:15.7px">0.20%</div>
<div class="cv" style="left:346.2px;top:428.0px;width:52.9px;height:15.7px;line-height:15.7px">0.20%</div>
<div class="cv" style="left:401.6px;top:428.0px;width:52.9px;height:15.7px;line-height:15.7px">0.20%</div>
<div class="cv" style="left:457.0px;top:428.0px;width:52.9px;height:15.7px;line-height:15.7px">0.20%</div>
<div class="cv" style="left:512.4px;top:428.0px;width:52.9px;height:15.7px;line-height:15.7px">0.20%</div>
<div class="cv" style="left:567.9px;top:428.0px;width:52.9px;height:15.7px;line-height:15.7px">0.20%</div>
<div class="cv" style="left:623.3px;top:428.0px;width:52.9px;height:15.7px;line-height:15.7px">0.20%</div>
<div class="cv" style="left:678.7px;top:428.0px;width:52.9px;height:15.7px;line-height:15.7px">0.20%</div>
<div class="cv" style="left:734.1px;top:428.0px;width:52.9px;height:15.7px;line-height:15.7px">0.20%</div>
<div class="cv" style="left:124.5px;top:443.7px;width:52.9px;height:15.1px;line-height:15.1px">2.00%</div>
<div class="cv" style="left:179.9px;top:443.7px;width:52.9px;height:15.1px;line-height:15.1px">2.00%</div>
<div class="cv" style="left:235.3px;top:443.7px;width:52.9px;height:15.1px;line-height:15.1px">2.00%</div>
<div class="cv" style="left:290.8px;top:443.7px;width:52.9px;height:15.1px;line-height:15.1px">2.00%</div>
<div class="cv" style="left:346.2px;top:443.7px;width:52.9px;height:15.1px;line-height:15.1px">2.00%</div>
<div class="cv" style="left:401.6px;top:443.7px;width:52.9px;height:15.1px;line-height:15.1px">2.00%</div>
<div class="cv" style="left:457.0px;top:443.7px;width:52.9px;height:15.1px;line-height:15.1px">2.00%</div>
<div class="cv" style="left:512.4px;top:443.7px;width:52.9px;height:15.1px;line-height:15.1px">2.00%</div>
<div class="cv" style="left:567.9px;top:443.7px;width:52.9px;height:15.1px;line-height:15.1px">2.00%</div>
<div class="cv" style="left:623.3px;top:443.7px;width:52.9px;height:15.1px;line-height:15.1px">2.00%</div>
<div class="cv" style="left:678.7px;top:443.7px;width:52.9px;height:15.1px;line-height:15.1px">2.00%</div>
<div class="cv" style="left:734.1px;top:443.7px;width:52.9px;height:15.1px;line-height:15.1px">2.00%</div>
<div class="cv" style="left:124.5px;top:458.8px;width:52.9px;height:15.7px;line-height:15.7px">850.00</div>
<div class="cv" style="left:179.9px;top:458.8px;width:52.9px;height:15.7px;line-height:15.7px">850.00</div>
<div class="cv" style="left:235.3px;top:458.8px;width:52.9px;height:15.7px;line-height:15.7px">850.00</div>
<div class="cv" style="left:290.8px;top:458.8px;width:52.9px;height:15.7px;line-height:15.7px">850.00</div>
<div class="cv" style="left:346.2px;top:458.8px;width:52.9px;height:15.7px;line-height:15.7px">850.00</div>
<div class="cv" style="left:401.6px;top:458.8px;width:52.9px;height:15.7px;line-height:15.7px">850.00</div>
<div class="cv" style="left:457.0px;top:458.8px;width:52.9px;height:15.7px;line-height:15.7px">850.00</div>
<div class="cv" style="left:512.4px;top:458.8px;width:52.9px;height:15.7px;line-height:15.7px">850.00</div>
<div class="cv" style="left:567.9px;top:458.8px;width:52.9px;height:15.7px;line-height:15.7px">850.00</div>
<div class="cv" style="left:623.3px;top:458.8px;width:52.9px;height:15.7px;line-height:15.7px">850.00</div>
<div class="cv" style="left:678.7px;top:458.8px;width:52.9px;height:15.7px;line-height:15.7px">850.00</div>
<div class="cv" style="left:734.1px;top:458.8px;width:52.9px;height:15.7px;line-height:15.7px">850.00</div>
<div class="cv" style="left:124.5px;top:474.5px;width:52.9px;height:15.5px;line-height:15.5px">20.00</div>
<div class="cv" style="left:179.9px;top:474.5px;width:52.9px;height:15.5px;line-height:15.5px">20.00</div>
<div class="cv" style="left:235.3px;top:474.5px;width:52.9px;height:15.5px;line-height:15.5px">20.00</div>
<div class="cv" style="left:290.8px;top:474.5px;width:52.9px;height:15.5px;line-height:15.5px">20.00</div>
<div class="cv" style="left:346.2px;top:474.5px;width:52.9px;height:15.5px;line-height:15.5px">20.00</div>
<div class="cv" style="left:401.6px;top:474.5px;width:52.9px;height:15.5px;line-height:15.5px">20.00</div>
<div class="cv" style="left:457.0px;top:474.5px;width:52.9px;height:15.5px;line-height:15.5px">20.00</div>
<div class="cv" style="left:512.4px;top:474.5px;width:52.9px;height:15.5px;line-height:15.5px">20.00</div>
<div class="cv" style="left:567.9px;top:474.5px;width:52.9px;height:15.5px;line-height:15.5px">20.00</div>
<div class="cv" style="left:623.3px;top:474.5px;width:52.9px;height:15.5px;line-height:15.5px">20.00</div>
<div class="cv" style="left:678.7px;top:474.5px;width:52.9px;height:15.5px;line-height:15.5px">20.00</div>
<div class="cv" style="left:734.1px;top:474.5px;width:52.9px;height:15.5px;line-height:15.5px">20.00</div>
<div class="cv" style="left:124.5px;top:490.0px;width:52.9px;height:15.7px;line-height:15.7px">1200.00</div>
<div class="cv" style="left:179.9px;top:490.0px;width:52.9px;height:15.7px;line-height:15.7px">1200.00</div>
<div class="cv" style="left:235.3px;top:490.0px;width:52.9px;height:15.7px;line-height:15.7px">1200.00</div>
<div class="cv" style="left:290.8px;top:490.0px;width:52.9px;height:15.7px;line-height:15.7px">1200.00</div>
<div class="cv" style="left:346.2px;top:490.0px;width:52.9px;height:15.7px;line-height:15.7px">1200.00</div>
<div class="cv" style="left:401.6px;top:490.0px;width:52.9px;height:15.7px;line-height:15.7px">1200.00</div>
<div class="cv" style="left:457.0px;top:490.0px;width:52.9px;height:15.7px;line-height:15.7px">1200.00</div>
<div class="cv" style="left:512.4px;top:490.0px;width:52.9px;height:15.7px;line-height:15.7px">1200.00</div>
<div class="cv" style="left:567.9px;top:490.0px;width:52.9px;height:15.7px;line-height:15.7px">1200.00</div>
<div class="cv" style="left:623.3px;top:490.0px;width:52.9px;height:15.7px;line-height:15.7px">1200.00</div>
<div class="cv" style="left:678.7px;top:490.0px;width:52.9px;height:15.7px;line-height:15.7px">1200.00</div>
<div class="cv" style="left:734.1px;top:490.0px;width:52.9px;height:15.7px;line-height:15.7px">1200.00</div>
<div class="cv" style="left:124.5px;top:505.7px;width:52.9px;height:15.5px;line-height:15.5px">123.00</div>
<div class="cv" style="left:179.9px;top:505.7px;width:52.9px;height:15.5px;line-height:15.5px">123.00</div>
<div class="cv" style="left:235.3px;top:505.7px;width:52.9px;height:15.5px;line-height:15.5px">123.00</div>
<div class="cv" style="left:290.8px;top:505.7px;width:52.9px;height:15.5px;line-height:15.5px">123.00</div>
<div class="cv" style="left:346.2px;top:505.7px;width:52.9px;height:15.5px;line-height:15.5px">123.00</div>
<div class="cv" style="left:401.6px;top:505.7px;width:52.9px;height:15.5px;line-height:15.5px">123.00</div>
<div class="cv" style="left:457.0px;top:505.7px;width:52.9px;height:15.5px;line-height:15.5px">123.00</div>
<div class="cv" style="left:512.4px;top:505.7px;width:52.9px;height:15.5px;line-height:15.5px">123.00</div>
<div class="cv" style="left:567.9px;top:505.7px;width:52.9px;height:15.5px;line-height:15.5px">123.00</div>
<div class="cv" style="left:623.3px;top:505.7px;width:52.9px;height:15.5px;line-height:15.5px">123.00</div>
<div class="cv" style="left:678.7px;top:505.7px;width:52.9px;height:15.5px;line-height:15.5px">123.00</div>
<div class="cv" style="left:734.1px;top:505.7px;width:52.9px;height:15.5px;line-height:15.5px">123.00</div>
<div class="cv" style="left:124.5px;top:521.2px;width:52.9px;height:15.6px;line-height:15.6px">13.00</div>
<div class="cv" style="left:179.9px;top:521.2px;width:52.9px;height:15.6px;line-height:15.6px">13.00</div>
<div class="cv" style="left:235.3px;top:521.2px;width:52.9px;height:15.6px;line-height:15.6px">13.00</div>
<div class="cv" style="left:290.8px;top:521.2px;width:52.9px;height:15.6px;line-height:15.6px">13.00</div>
<div class="cv" style="left:346.2px;top:521.2px;width:52.9px;height:15.6px;line-height:15.6px">13.00</div>
<div class="cv" style="left:401.6px;top:521.2px;width:52.9px;height:15.6px;line-height:15.6px">13.00</div>
<div class="cv" style="left:457.0px;top:521.2px;width:52.9px;height:15.6px;line-height:15.6px">13.00</div>
<div class="cv" style="left:512.4px;top:521.2px;width:52.9px;height:15.6px;line-height:15.6px">13.00</div>
<div class="cv" style="left:567.9px;top:521.2px;width:52.9px;height:15.6px;line-height:15.6px">13.00</div>
<div class="cv" style="left:623.3px;top:521.2px;width:52.9px;height:15.6px;line-height:15.6px">13.00</div>
<div class="cv" style="left:678.7px;top:521.2px;width:52.9px;height:15.6px;line-height:15.6px">13.00</div>
<div class="cv" style="left:734.1px;top:521.2px;width:52.9px;height:15.6px;line-height:15.6px">13.00</div>
</body></html>
